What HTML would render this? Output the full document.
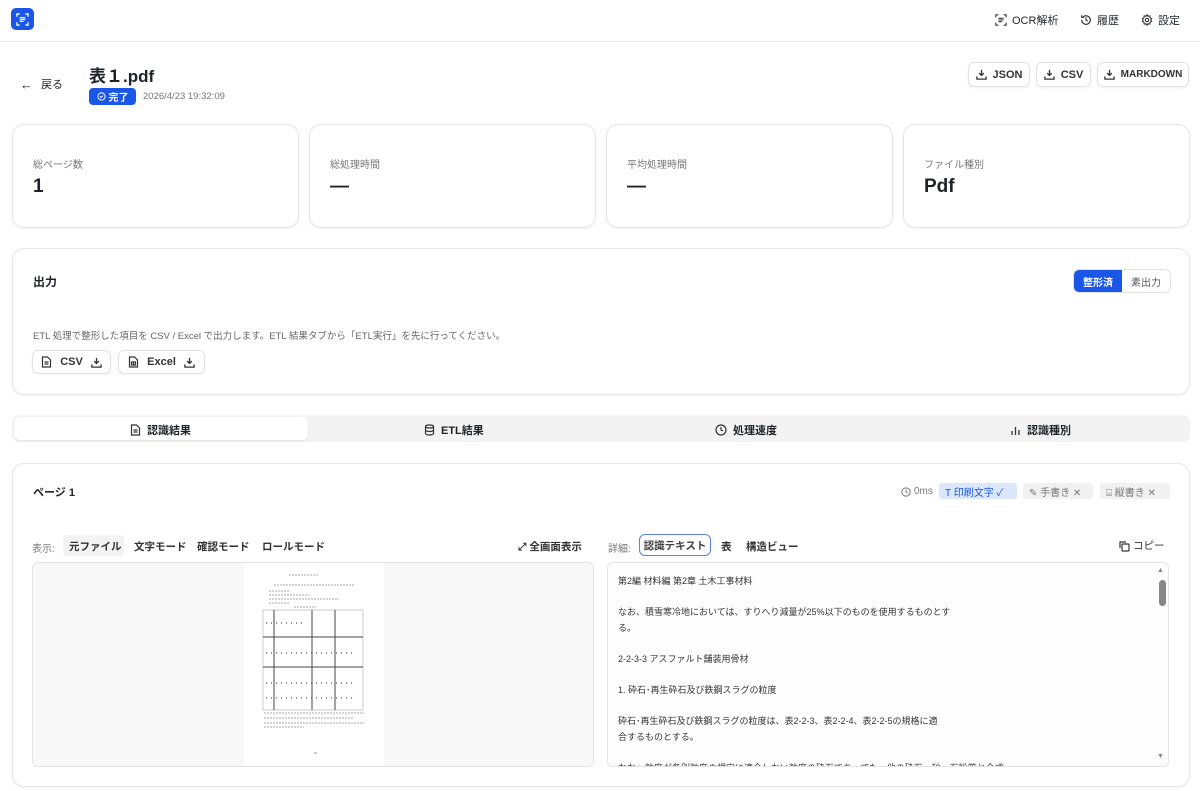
<!DOCTYPE html>
<html><head><meta charset="utf-8"><style>
*{box-sizing:border-box;margin:0;padding:0}
body{width:1200px;height:791px;overflow:hidden;background:#fff;font-family:"Liberation Sans","Noto Sans CJK JP",sans-serif;color:#1f2328;position:relative}
.a{position:absolute}
.card{position:absolute;border:1px solid #e6e6e6;border-radius:12px;background:#fff;box-shadow:0 1px 2px rgba(0,0,0,.06)}
.btn{position:absolute;border:1px solid #e2e2e2;border-radius:6px;background:#fff;font-size:11px;font-weight:bold;display:flex;align-items:center;justify-content:center;gap:6px;color:#333;box-shadow:0 1px 2px rgba(0,0,0,.05)}
svg{display:block}
.lbl{font-size:10px;color:#777}
.val{font-size:19px;font-weight:bold}
.chip{position:absolute;height:16px;border-radius:3px;font-size:10px;display:flex;align-items:center;gap:4px;padding:0 6px}
.txt{font-size:9px;color:#333;line-height:15.6px}
</style></head><body>
<!-- header -->
<div class="a" style="left:11px;top:8px;width:23px;height:22px;background:#1a56e8;border-radius:5px;display:flex;align-items:center;justify-content:center">
<svg width="13" height="13" viewBox="0 0 14 14" fill="none" stroke="#fff" stroke-width="1.4"><path d="M1 4V1h3M10 1h3v3M13 10v3h-3M4 13H1v-3M4 5h6M4 7h6M4 9h4"/></svg></div>
<div class="a" style="left:995px;top:12px;font-size:11px;display:flex;gap:5px;align-items:center"><svg width="12" height="12" viewBox="0 0 14 14" fill="none" stroke="#333" stroke-width="1.3"><path d="M1 4V1h3M10 1h3v3M13 10v3h-3M4 13H1v-3M4 5h6M4 7h6M4 9h4"/></svg>OCR解析</div>
<div class="a" style="left:1080px;top:12px;font-size:11px;display:flex;gap:5px;align-items:center"><svg width="12" height="12" viewBox="0 0 14 14" fill="none" stroke="#333" stroke-width="1.4"><path d="M2 7a5 5 0 1 0 1.5-3.5M2 1.5v2.5h2.5M7 4v3l2 1.5"/></svg>履歴</div>
<div class="a" style="left:1141px;top:12px;font-size:11px;display:flex;gap:5px;align-items:center"><svg width="12" height="12" viewBox="0 0 14 14" fill="none" stroke="#333" stroke-width="1.3"><circle cx="7" cy="7" r="2"/><path d="M7 1l1.2 1.6 2-.4.4 2L12.4 5.5 11.5 7l.9 1.5-1.8 1.3-.4 2-2-.4L7 13l-1.2-1.6-2 .4-.4-2L1.6 8.5 2.5 7l-.9-1.5 1.8-1.3.4-2 2 .4z"/></svg>設定</div>
<div class="a" style="left:0;top:41px;width:1200px;height:1px;background:#e8e8e8"></div>
<!-- title -->
<div class="a" style="left:20px;top:76px;font-size:11px;display:flex;gap:8px;align-items:center"><span style="font-size:13px">←</span>戻る</div>
<div class="a" style="left:89px;top:62px;font-size:17px;font-weight:bold">表１.pdf</div>
<div class="a" style="left:89px;top:88px;width:47px;height:17px;background:#1a56e8;border-radius:4px;color:#fff;font-size:10px;font-weight:bold;display:flex;align-items:center;justify-content:center;gap:3px"><svg width="9" height="9" viewBox="0 0 10 10" fill="none" stroke="#fff" stroke-width="1.1"><circle cx="5" cy="5" r="4"/><path d="M3.3 5l1.2 1.2 2-2.2"/></svg>完了</div>
<div class="a" style="left:143px;top:91px;font-size:9.5px;color:#777">2026/4/23 19:32:09</div>
<div class="btn" style="left:968px;top:62px;width:62px;height:25px"><svg width="11" height="11" viewBox="0 0 12 12" fill="none" stroke="#333" stroke-width="1.4"><path d="M6 1v6M3.5 4.5 6 7l2.5-2.5M1 8v3h10V8"/></svg>JSON</div>
<div class="btn" style="left:1036px;top:62px;width:55px;height:25px"><svg width="11" height="11" viewBox="0 0 12 12" fill="none" stroke="#333" stroke-width="1.4"><path d="M6 1v6M3.5 4.5 6 7l2.5-2.5M1 8v3h10V8"/></svg>CSV</div>
<div class="btn" style="left:1097px;top:62px;width:92px;height:25px;font-size:10px"><svg width="11" height="11" viewBox="0 0 12 12" fill="none" stroke="#333" stroke-width="1.4"><path d="M6 1v6M3.5 4.5 6 7l2.5-2.5M1 8v3h10V8"/></svg>MARKDOWN</div>
<!-- stats -->
<div class="card" style="left:12px;top:124px;width:287px;height:104px"><div class="lbl a" style="left:20px;top:31px">総ページ数</div><div class="val a" style="left:20px;top:51px">1</div></div>
<div class="card" style="left:309px;top:124px;width:287px;height:104px"><div class="lbl a" style="left:20px;top:31px">総処理時間</div><div class="val a" style="left:20px;top:51px">—</div></div>
<div class="card" style="left:606px;top:124px;width:287px;height:104px"><div class="lbl a" style="left:20px;top:31px">平均処理時間</div><div class="val a" style="left:20px;top:51px">—</div></div>
<div class="card" style="left:903px;top:124px;width:287px;height:104px"><div class="lbl a" style="left:20px;top:31px">ファイル種別</div><div class="val a" style="left:20px;top:51px">Pdf</div></div>
<!-- output -->
<div class="card" style="left:12px;top:248px;width:1178px;height:147px">
<div class="a" style="left:20px;top:24px;font-size:12px;font-weight:bold">出力</div>
<div class="a" style="left:1060px;top:20px;width:98px;height:24px;border:1px solid #e2e2e2;border-radius:6px;overflow:hidden;display:flex;font-size:10px">
<div style="width:48px;background:#1a56e8;color:#fff;font-weight:bold;display:flex;align-items:center;justify-content:center">整形済</div>
<div style="flex:1;color:#555;display:flex;align-items:center;justify-content:center">素出力</div></div>
<div class="a" style="left:20px;top:79px;font-size:9.5px;color:#666">ETL 処理で整形した項目を CSV / Excel で出力します。ETL 結果タブから「ETL実行」を先に行ってください。</div>
</div>
<div class="btn" style="left:32px;top:350px;width:79px;height:24px;gap:8px"><svg width="11" height="12" viewBox="0 0 11 12" fill="none" stroke="#333" stroke-width="1.2"><path d="M1.5 1h5l3 3v7h-8zM3.5 6h4M3.5 8h4"/></svg>CSV<svg width="11" height="11" viewBox="0 0 12 12" fill="none" stroke="#333" stroke-width="1.4"><path d="M6 1v6M3.5 4.5 6 7l2.5-2.5M1 8v3h10V8"/></svg></div>
<div class="btn" style="left:118px;top:350px;width:87px;height:24px;gap:8px"><svg width="11" height="12" viewBox="0 0 11 12" fill="none" stroke="#333" stroke-width="1.2"><path d="M1.5 1h5l3 3v7h-8zM3.5 6h4v3h-4zM5.5 6v3"/></svg>Excel<svg width="11" height="11" viewBox="0 0 12 12" fill="none" stroke="#333" stroke-width="1.4"><path d="M6 1v6M3.5 4.5 6 7l2.5-2.5M1 8v3h10V8"/></svg></div>
<!-- tabs -->
<div class="a" style="left:12px;top:415px;width:1178px;height:27px;background:#f3f3f3;border-radius:7px"></div>
<div class="a" style="left:14px;top:417px;width:294px;height:23px;background:#fff;border-radius:6px;box-shadow:0 1px 2px rgba(0,0,0,.08)"></div>
<div class="a" style="left:130px;top:422px;font-size:11px;font-weight:bold;display:flex;gap:6px;align-items:center"><svg width="11" height="12" viewBox="0 0 11 12" fill="none" stroke="#333" stroke-width="1.2"><path d="M1.5 1h5l3 3v7h-8zM3.5 6h4M3.5 8h4"/></svg>認識結果</div>
<div class="a" style="left:424px;top:422px;font-size:11px;font-weight:bold;display:flex;gap:6px;align-items:center"><svg width="11" height="12" viewBox="0 0 11 12" fill="none" stroke="#333" stroke-width="1.2"><ellipse cx="5.5" cy="2.5" rx="4" ry="1.5"/><path d="M1.5 2.5v7c0 .8 1.8 1.5 4 1.5s4-.7 4-1.5v-7M1.5 6c0 .8 1.8 1.5 4 1.5s4-.7 4-1.5"/></svg>ETL結果</div>
<div class="a" style="left:715px;top:422px;font-size:11px;font-weight:bold;display:flex;gap:6px;align-items:center"><svg width="12" height="12" viewBox="0 0 12 12" fill="none" stroke="#333" stroke-width="1.2"><circle cx="6" cy="6" r="5"/><path d="M6 3v3l2 1"/></svg>処理速度</div>
<div class="a" style="left:1010px;top:422px;font-size:11px;font-weight:bold;display:flex;gap:6px;align-items:center"><svg width="11" height="11" viewBox="0 0 11 11" fill="none" stroke="#333" stroke-width="1.3"><path d="M2 10V6M5.5 10V2M9 10V5"/></svg>認識種別</div>
<!-- page card -->
<div class="card" style="left:12px;top:463px;width:1178px;height:324px">
<div class="a" style="left:20px;top:20px;font-size:11px;font-weight:bold">ページ 1</div>
</div>
<div class="a" style="left:901px;top:485px;font-size:10px;color:#777;display:flex;gap:3px;align-items:center;line-height:12px;height:12px;top:486px"><svg width="10" height="10" viewBox="0 0 12 12" fill="none" stroke="#777" stroke-width="1.2"><circle cx="6" cy="6" r="5"/><path d="M6 3v3l2 1"/></svg>0ms</div>
<div class="chip" style="left:939px;top:483px;width:78px;background:#dbe7fd;color:#1a56e8">T 印刷文字 ✓</div>
<div class="chip" style="left:1023px;top:483px;width:70px;background:#f1f1f1;color:#777">✎ 手書き ✕</div>
<div class="chip" style="left:1100px;top:483px;width:70px;background:#f1f1f1;color:#777">⌸ 縦書き ✕</div>
<div class="a" style="left:32px;top:540px;font-size:10px;color:#777">表示:</div>
<div class="a" style="left:63px;top:535px;width:61px;height:21px;background:#f3f3f3;border-radius:4px"></div>
<div class="a" style="left:69px;top:539px;font-size:10.5px;color:#333;font-weight:bold">元ファイル</div>
<div class="a" style="left:134px;top:539px;font-size:10.5px;color:#333;font-weight:bold">文字モード</div>
<div class="a" style="left:197px;top:539px;font-size:10.5px;color:#333;font-weight:bold">確認モード</div>
<div class="a" style="left:262px;top:539px;font-size:10.5px;color:#333;font-weight:bold">ロールモード</div>
<div class="a" style="left:518px;top:539px;font-size:10.5px;color:#333;font-weight:bold">⤢ 全画面表示</div>
<div class="a" style="left:608px;top:540px;font-size:10px;color:#777">詳細:</div>
<div class="a" style="left:639px;top:534px;width:72px;height:22px;border:1.5px solid #5b7fe0;border-radius:6px;font-size:10.5px;font-weight:bold;color:#444;display:flex;align-items:center;justify-content:center">認識テキスト</div>
<div class="a" style="left:721px;top:539px;font-size:10.5px;color:#333;font-weight:bold">表</div>
<div class="a" style="left:746px;top:539px;font-size:10.5px;color:#333;font-weight:bold">構造ビュー</div>
<div class="a" style="left:1118px;top:538px;font-size:10.5px;color:#333;display:flex;gap:3px;align-items:center"><svg width="12" height="12" viewBox="0 0 12 12" fill="none" stroke="#333" stroke-width="1.2"><rect x="4" y="4" width="7" height="7" rx="1"/><path d="M2 8V2h6"/></svg>コピー</div>
<!-- left preview -->
<div class="a" style="left:32px;top:562px;width:562px;height:205px;border:1px solid #e3e3e3;border-radius:6px;background:#f8f8f8;overflow:hidden">
<div class="a" style="left:211px;top:0;width:140px;height:205px;background:#fff">
<svg width="140" height="205" viewBox="0 0 140 205" stroke="#555" fill="none" stroke-width=".6">
<path d="M45 12h30M30 22h80M25 28h20M25 32h40M25 36h70M25 40h20M50 44h22" stroke-dasharray="2 1"/>
<rect x="19" y="47" width="100" height="100" stroke="#aaa"/>
<path d="M30 47v100M68 47v100M91 47v100" stroke="#444" stroke-width="1"/>
<path d="M19 74h100M19 104h100" stroke="#444" stroke-width="1"/>
<path d="M22 60h40M22 90h90M22 120h90M22 135h90" stroke-dasharray="1 4" stroke-width="1.2"/>
<path d="M20 150h100M20 155h90M20 160h100M20 164h40" stroke-dasharray="2 1"/>
<path d="M70 190h3"/></svg></div></div>
<!-- right text -->
<div class="a" style="left:607px;top:562px;width:562px;height:205px;border:1px solid #e3e3e3;border-radius:6px;background:#fdfdfd;overflow:hidden">
<div class="a txt" style="left:10px;top:11px;width:520px">第2編 材料編 第2章 土木工事材料<br><br>なお、積雪寒冷地においては、すりへり減量が25%以下のものを使用するものとす<br>る。<br><br>2-2-3-3 アスファルト舗装用骨材<br><br>1. 砕石･再生砕石及び鉄鋼スラグの粒度<br><br>砕石･再生砕石及び鉄鋼スラグの粒度は、表2-2-3、表2-2-4、表2-2-5の規格に適<br>合するものとする。<br><br>なお、粒度が各別粒度の規定に適合しない粒度の砕石であっても、他の砕石、砂、石粉等と合成</div>
<div class="a" style="left:549px;top:4px;font-size:7px;color:#888">▲</div>
<div class="a" style="left:551px;top:17px;width:7px;height:26px;background:#888;border-radius:4px"></div>
<div class="a" style="left:549px;top:190px;font-size:7px;color:#888">▼</div>
</div>
</body></html>
